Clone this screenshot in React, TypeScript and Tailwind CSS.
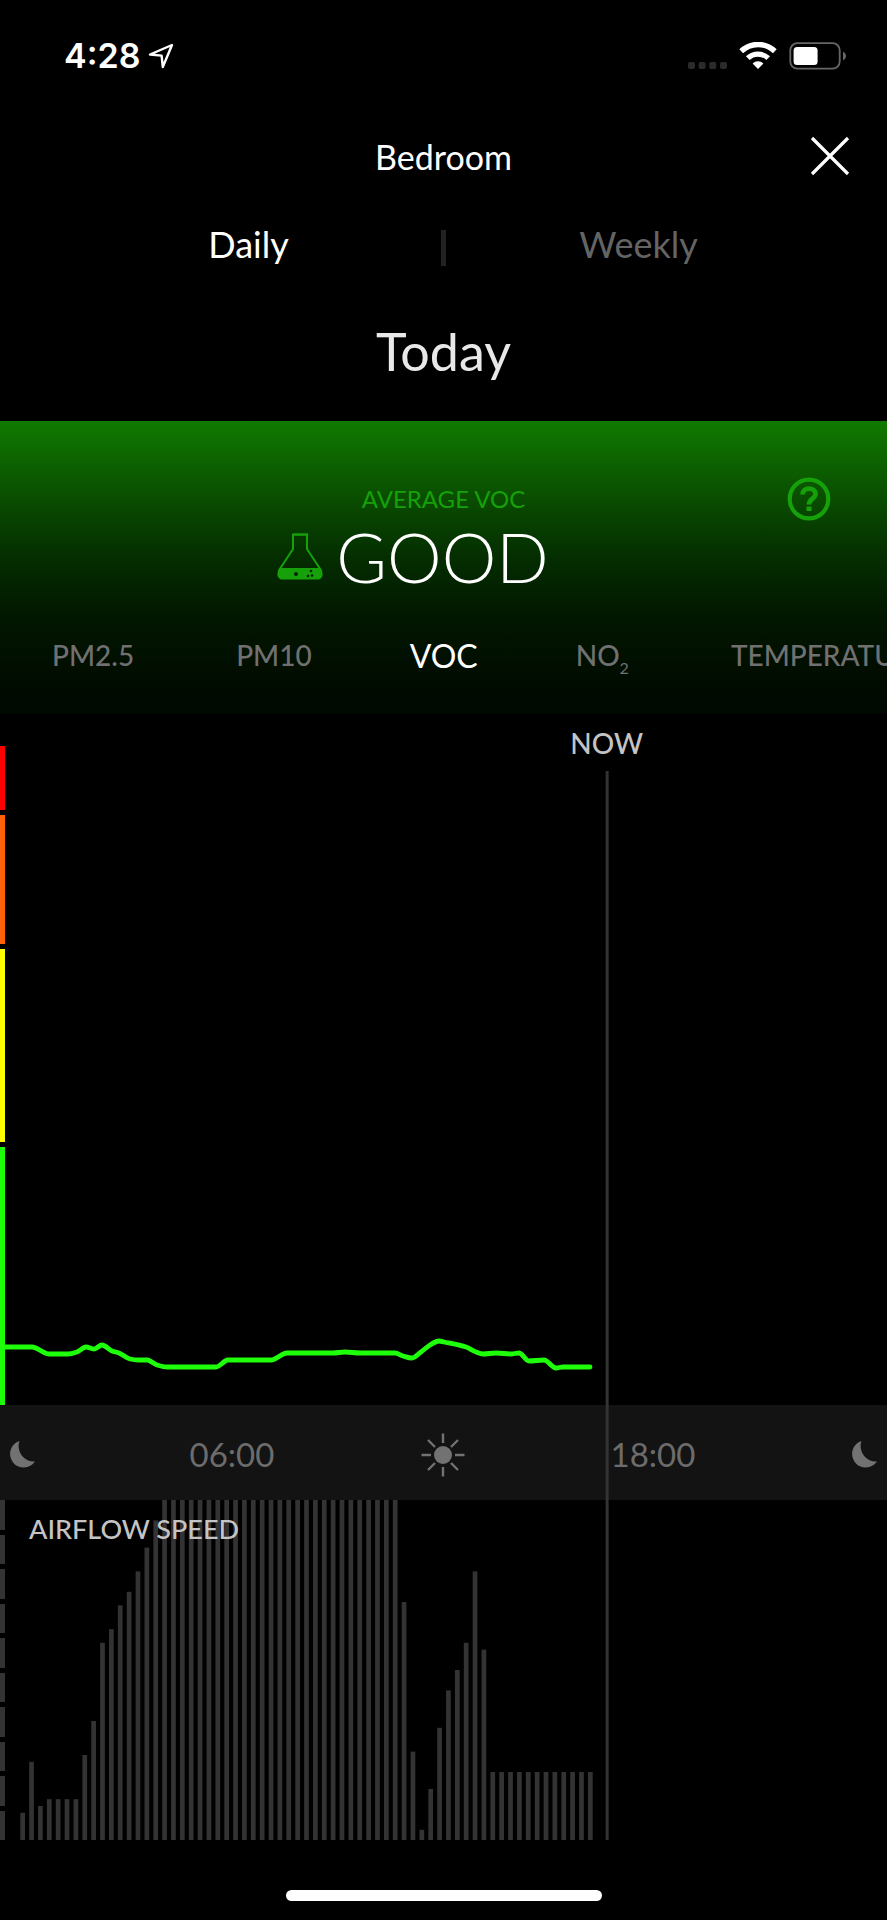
import React from "react";

type Point = [number, number];

const VOC_POINTS: Point[] = [
  [0, 633], [5, 633], [32, 633], [49, 640], [68, 640], [77, 638], [86, 633], [94, 635],
  [102, 631], [112, 637], [119, 639], [130, 645], [138, 646], [147, 646], [157, 651],
  [167, 653], [216, 653], [228, 646], [271, 646], [287, 639], [333, 639], [345, 638],
  [360, 639], [395, 639], [403, 642], [412, 644], [421, 638], [430, 631], [439, 627],
  [444, 628], [466, 633], [476, 638], [483, 640], [496, 639], [511, 640], [519, 639],
  [529, 647], [544, 646], [556, 654], [563, 653], [590, 653],
];

const AIRFLOW: number[] = [
  8, 23, 10, 12, 12, 12, 12, 25, 35, 58, 62, 69, 73, 79, 86, 94,
  ...Array<number>(27).fill(100),
  70, 26, 3, 15, 33, 44, 50, 58, 79, 56,
  ...Array<number>(12).fill(20),
];

function smoothPath(points: Point[]): string {
  const secant = points.slice(1).map(([x, y], i) => (y - points[i][1]) / (x - points[i][0]));
  const slope = points.map((_, i) => {
    const a = secant[i - 1];
    const b = secant[i];
    if (a === undefined || b === undefined || a * b <= 0) return 0;
    return (2 * a * b) / (a + b);
  });
  return points.slice(1).reduce((d, [x, y], i) => {
    const [px, py] = points[i];
    const h = (x - px) / 3;
    return `${d}C${px + h} ${py + slope[i] * h} ${x - h} ${y - slope[i + 1] * h} ${x} ${y}`;
  }, `M${points[0][0]} ${points[0][1]}`);
}

function StatusBar() {
  return (
    <div className="flex h-28 items-center justify-between pr-10 pl-16">
      <div className="flex items-center gap-2 font-['Inter',sans-serif] text-[34px] leading-10 font-semibold">
        <span>4:28</span>
        <svg width="26" height="26" viewBox="0 0 26 26" fill="none" stroke="white" strokeWidth="2.4" strokeLinejoin="round" aria-hidden="true">
          <path d="M24 2 2 11.5 13.6 12.6 14.8 24Z" />
        </svg>
      </div>
      <div className="flex items-center gap-3">
        <svg width="40" height="28" viewBox="0 0 40 28" fill="#2b2b2b" aria-hidden="true">
          <rect x="1" y="20" width="7" height="7" rx="2" />
          <rect x="11.6" y="20" width="7" height="7" rx="2" />
          <rect x="22.3" y="20" width="7" height="7" rx="2" />
          <rect x="33" y="20" width="7" height="7" rx="2" />
        </svg>
        <svg width="38" height="28" viewBox="0 0 38 28" fill="none" stroke="white" aria-hidden="true">
          <path d="M2.2 9.3a24 24 0 0 1 33.6 0" strokeWidth="5.4" />
          <path d="M8.8 16.2a14.6 14.6 0 0 1 20.4 0" strokeWidth="5.2" />
          <path d="M13.6 21.4a7.8 7.8 0 0 1 10.8 0L19 27Z" fill="white" stroke="none" />
        </svg>
        <svg width="58" height="28" viewBox="0 0 58 28" aria-hidden="true">
          <rect x="1.3" y="1.2" width="49.4" height="25.4" rx="7" fill="none" stroke="#666" strokeWidth="1.8" />
          <rect x="4.6" y="5" width="24" height="18" rx="3.5" fill="white" />
          <path d="M54 9.8c4 1.6 4 6.8 0 8.4Z" fill="#666" />
        </svg>
      </div>
    </div>
  );
}

function FlaskIcon() {
  return (
    <svg className="shrink-0" width="48" height="48" viewBox="0 0 48 48" aria-hidden="true">
      <path d="M17 1.5H31V16L45.5 38M17 1.5V16L2.5 38" fill="none" stroke="#16a00a" strokeWidth="2" />
      <path d="M16 1.6H32" stroke="#16a00a" strokeWidth="2" />
      <path d="M4.5 35H43.5C49 40 46.5 46.5 41.5 46.5H6.5C1.5 46.5-1 40 4.5 35Z" fill="#16a00a" />
      <g fill="#032200">
        <circle cx="20" cy="41" r="2" />
        <circle cx="35" cy="38" r="1.3" />
        <circle cx="32" cy="43" r="1.3" />
        <circle cx="36" cy="42.5" r="1.3" />
      </g>
    </svg>
  );
}

function Moon() {
  return (
    <svg className="shrink-0" width="26" height="27" viewBox="0 0 26 27" fill="#727272" aria-hidden="true">
      <path d="M10.5 0A13.6 13.6 0 1 0 26 20.5 15.4 15.4 0 0 1 10.5 0Z" />
    </svg>
  );
}

function Sun() {
  return (
    <svg className="shrink-0" width="44" height="44" viewBox="-22 -22 44 44" stroke="#727272" strokeWidth="2.4" aria-hidden="true">
      <circle r="9" fill="#727272" stroke="none" />
      <path d="M0-21.5V-12M0 21.5V12M-21.5 0H-12M21.5 0H12M-15-15-8-8M15 15 8 8M-15 15-8 8M15-15 8-8" />
    </svg>
  );
}

export default function App() {
  return (
    <main className="flex min-h-screen flex-col overflow-hidden bg-black font-['Lato',sans-serif] text-white">
      <StatusBar />

      <header className="grid grid-cols-[1fr_auto_1fr] items-center px-9 py-5">
        <h1 className="col-start-2 text-[34px] leading-[50px]">Bedroom</h1>
        <button type="button" aria-label="Close" className="justify-self-end">
          <svg width="42" height="42" viewBox="0 0 42 42" stroke="white" strokeWidth="3.2" aria-hidden="true">
            <path d="M3 2 39 38M39 2 3 38" />
          </svg>
        </button>
      </header>

      <nav aria-label="Period" className="flex items-end px-14 py-5 text-[36px] leading-[44px]">
        <button type="button" className="flex-1">Daily</button>
        <span className="h-9 w-[5px] bg-[#222]" />
        <button type="button" className="flex-1 text-[#646464]">Weekly</button>
      </nav>

      <h2 className="pt-7 pb-8 text-center text-[52px] leading-[75px] text-[#e8e8e8]">Today</h2>

      <section className="relative bg-[linear-gradient(#107a00_0%,#0d6400_13%,#084400_32%,#042c00_48%,#021800_66%,#010e00_84%,#000800_100%)] pt-[62px]">
        <p className="text-center text-2xl leading-8 text-[#16a00a]">AVERAGE VOC</p>
        <div className="flex items-center justify-center gap-3 pr-[62px]">
          <FlaskIcon />
          <p className="text-[69px] leading-[84px] font-light">GOOD</p>
        </div>
        <button type="button" aria-label="About VOC" className="absolute top-14 right-14">
          <svg width="44" height="44" viewBox="0 0 44 44" fill="none" stroke="#16a00a" aria-hidden="true">
            <circle cx="22" cy="22" r="19.3" strokeWidth="4.2" />
            <path d="M15.5 17.5C15.500 9.500 28.500 9.800 28.500 17 28.500 21.500 22 21.800 22 27.500" strokeWidth="4.8" />
            <path d="M22 29.5V34" strokeWidth="5" />
          </svg>
        </button>
        <nav aria-label="Measurement" className="flex items-center gap-[102px] overflow-hidden pt-[30px] pb-8 pl-[52px] text-[28px] leading-[53px] font-medium text-[#707070]">
          <button type="button">PM2.5</button>
          <button type="button">PM10</button>
          <button type="button" className="-mx-1 text-[32px] font-normal text-white">VOC</button>
          <button type="button" className="flex items-baseline">
            NO<sub className="-bottom-2 text-base leading-none font-normal">2</sub>
          </button>
          <button type="button">TEMPERATURE</button>
        </nav>
      </section>

      <div className="relative flex flex-1 flex-col">
        <section aria-label="VOC level today" className="relative flex min-h-[480px] flex-1 pt-8">
          <div className="flex w-[5px] flex-col gap-[5px]">
            <span className="flex-1 bg-[#ff0000]" />
            <span className="flex-2 bg-[#ff6208]" />
            <span className="flex-3 bg-[#ffff00]" />
            <span className="flex-4 bg-[#1eff0a]" />
          </div>
          <svg className="absolute inset-0 size-full" viewBox="0 0 887 691" preserveAspectRatio="none" aria-hidden="true">
            <path d={smoothPath(VOC_POINTS)} fill="none" stroke="#1eff0a" strokeWidth="4.8" strokeLinecap="round" vectorEffect="non-scaling-stroke" />
          </svg>
        </section>

        <div className="flex h-[95px] items-center justify-between bg-[#131313] pt-1 pr-[10px] pl-2 text-[33px] text-[#6c6c6c] *:flex *:w-[27px] *:justify-center">
          <span><Moon /></span>
          <span>06:00</span>
          <span><Sun /></span>
          <span>18:00</span>
          <span><Moon /></span>
        </div>

        <section className="relative flex h-[340px]">
          <div className="flex w-[5px] flex-col gap-[5px]">
            {Array.from({ length: 10 }, (_, i) => (
              <span key={i} className="flex-1 bg-[#333]" />
            ))}
          </div>
          <svg className="absolute inset-0 size-full" viewBox="0 0 100 100" preserveAspectRatio="none" fill="#333" aria-hidden="true">
            {AIRFLOW.map((value, i) => (
              <rect key={i} x={2.29 + i} y={100 - value} width="0.53" height={value} />
            ))}
          </svg>
          <h3 className="relative pt-[11px] pl-6 text-[27px] leading-9 font-medium text-[#c4c4c4]">AIRFLOW SPEED</h3>
        </section>

        <div className="absolute inset-y-0 left-[68.4%] flex -translate-x-1/2 flex-col items-center gap-[10px] pt-[11px] text-[28px] leading-9 font-medium text-[#c4c4c4]">
          <span>NOW</span>
          <span className="w-[3px] flex-1 bg-[#333]" />
        </div>
      </div>

      <footer className="flex justify-center pt-[50px] pb-[19px]">
        <span className="h-[11px] w-[316px] rounded-full bg-white" />
      </footer>
    </main>
  );
}
